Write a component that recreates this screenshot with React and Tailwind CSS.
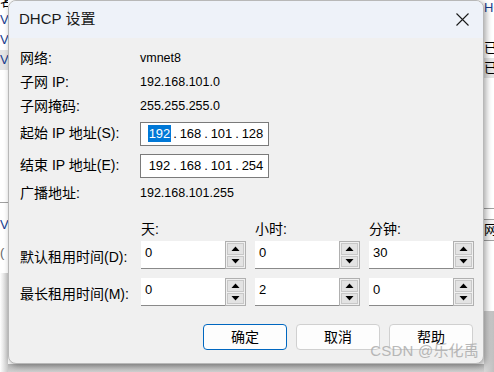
import React from "react";

const FONT = {
  fontFamily: '"Liberation Sans", "Noto Sans CJK SC", sans-serif',
};

function IpField({ parts, selected }) {
  return (
    <div className="flex items-center h-[24px] w-[129px] bg-white border border-[#7a7a7a] pl-[7px] text-[13px] text-black">
      {parts.map((p, i) => (
        <React.Fragment key={i}>
          {i > 0 && <span className="w-[8px] text-center">.</span>}
          <span
            className={
              "w-[23px] text-center leading-[17px] " +
              (i === 0 && selected ? "bg-[#0078d7] text-white" : "")
            }
          >
            {p}
          </span>
        </React.Fragment>
      ))}
    </div>
  );
}

function Arrow({ up }) {
  return (
    <svg width="9" height="5" viewBox="0 0 9 5">
      {up ? (
        <polygon points="0.5,5 4.5,0.5 8.5,5" fill="#000" />
      ) : (
        <polygon points="0.5,0 4.5,4.5 8.5,0" fill="#000" />
      )}
    </svg>
  );
}

function Spin({ value }) {
  return (
    <div className="flex h-[28px] w-[105px]">
      <div className="flex-1 bg-white border-b border-[#8a8a8a] pl-[4px] pt-[4px] text-[13px] leading-[15px] text-black">
        {value}
      </div>
      <div className="w-[21px] border border-[#b0b0b0] bg-[#f0f0f0] p-[1px] flex flex-col gap-[1px]">
        <div className="flex-1 bg-[#e3e3e3] border border-[#c8c8c8] flex items-center justify-center">
          <Arrow up />
        </div>
        <div className="flex-1 bg-[#e3e3e3] border border-[#c8c8c8] flex items-center justify-center">
          <Arrow />
        </div>
      </div>
    </div>
  );
}

function Btn({ children, primary }) {
  return (
    <button
      className={
        "w-[84px] h-[26px] rounded-[4px] bg-[#fdfdfd] text-[14px] text-black " +
        (primary
          ? "border-[1.5px] border-[#0067c0]"
          : "border border-[#d0d0d0]")
      }
    >
      {children}
    </button>
  );
}

export default function App() {
  return (
    <div
      className="w-[494px] h-[372px] bg-white flex overflow-hidden text-black"
      style={FONT}
    >
      {/* left strip of window behind */}
      <div className="w-[8px] h-full flex flex-col text-[13px] text-[#1a3d8f] overflow-hidden leading-[20px]">
        <div className="h-[18px] -mt-[8px] text-black">名</div>
        <div className="h-[20px]">V</div>
        <div className="h-[20px]">V</div>
        <div className="h-[20px] bg-[#e5e5e5]">V</div>
        <div className="h-[133px] border-b border-[#a0a0a0]" />
        <div className="h-[40px] pt-[12px]">V</div>
        <div className="h-[30px] text-[#666]">(</div>
        <div className="flex-1 bg-gradient-to-r from-white to-[#c8c8c8]" />
      </div>

      <div className="w-[476px] flex flex-col">
        {/* dialog */}
        <div className="h-[364px] rounded-[8px] bg-[#f0f0f0] border border-[#b8b8b8] shadow-[2px_2px_6px_rgba(0,0,0,0.35)] overflow-hidden flex flex-col relative">
          <div className="h-[37px] bg-[#eef2f9] flex items-center justify-between pl-[10px] pr-[14px]">
            <span className="text-[15px] text-[#1a1a1a]">DHCP 设置</span>
            <svg width="13" height="13" viewBox="0 0 13 13">
              <path d="M0.5 0.5L12.5 12.5M12.5 0.5L0.5 12.5" stroke="#1a1a1a" strokeWidth="1.1" />
            </svg>
          </div>

          <div className="flex flex-col pl-[11px] pt-[8px] text-[14px]">
            <div className="grid grid-cols-[120px_1fr] items-center">
              <div className="h-[24px] flex items-center">网络:</div>
              <div className="text-[12.5px]">vmnet8</div>
              <div className="h-[24px] flex items-center">子网 IP:</div>
              <div className="text-[12.5px]">192.168.101.0</div>
              <div className="h-[24px] flex items-center">子网掩码:</div>
              <div className="text-[12.5px]">255.255.255.0</div>
              <div className="h-[31px] flex items-center">起始 IP 地址(S):</div>
              <div>
                <IpField parts={["192", "168", "101", "128"]} selected />
              </div>
              <div className="h-[33px] flex items-center">结束 IP 地址(E):</div>
              <div>
                <IpField parts={["192", "168", "101", "254"]} />
              </div>
              <div className="h-[22px] flex items-center">广播地址:</div>
              <div className="text-[12.5px]">192.168.101.255</div>
            </div>

            <div className="grid grid-cols-[112px_105px_105px_105px] gap-x-[9px] items-center mt-[15px]">
              <div />
              <div className="h-[22px]">天:</div>
              <div className="h-[22px]">小时:</div>
              <div className="h-[22px]">分钟:</div>

              <div className="pt-[4px] whitespace-nowrap">默认租用时间(D):</div>
              <Spin value="0" />
              <Spin value="0" />
              <Spin value="30" />

              <div className="pt-[4px] mt-[9px] whitespace-nowrap">最长租用时间(M):</div>
              <div className="mt-[9px]">
                <Spin value="0" />
              </div>
              <div className="mt-[9px]">
                <Spin value="2" />
              </div>
              <div className="mt-[9px]">
                <Spin value="0" />
              </div>
            </div>
          </div>

          <div className="flex justify-end gap-[9px] pr-[10px] mt-[18px]">
            <Btn primary>确定</Btn>
            <Btn>取消</Btn>
            <Btn>帮助</Btn>
          </div>

          {/* watermark */}
          <div className="absolute right-[4px] bottom-[1px] text-[15px] text-[#a8a8a8] opacity-80 tracking-[0.2px]">
            CSDN @乐化禹
          </div>
        </div>
        <div className="flex-1 bg-gradient-to-b from-[#b8b8b8] to-[#d0d0d0]" />
      </div>

      {/* right strip of window behind */}
      <div className="w-[10px] h-full flex flex-col text-[13px] overflow-hidden leading-[20px]">
        <div className="h-[18px] -mt-[2px] text-[#1a3d8f]">HC</div>
        <div className="h-[20px] mt-[22px]">已</div>
        <div className="h-[20px] bg-[#e5e5e5]">已</div>
        <div className="h-[131px] border-b border-[#a0a0a0]" />
        <div className="h-[22px] mt-[10px] border-y border-[#a0a0a0] bg-[#f5f5f5]">网</div>
        <div className="h-[70px]" />
        <div className="flex-1 bg-gradient-to-r from-[#d8d8d8] to-[#c0c0c0]" />
      </div>
    </div>
  );
}
